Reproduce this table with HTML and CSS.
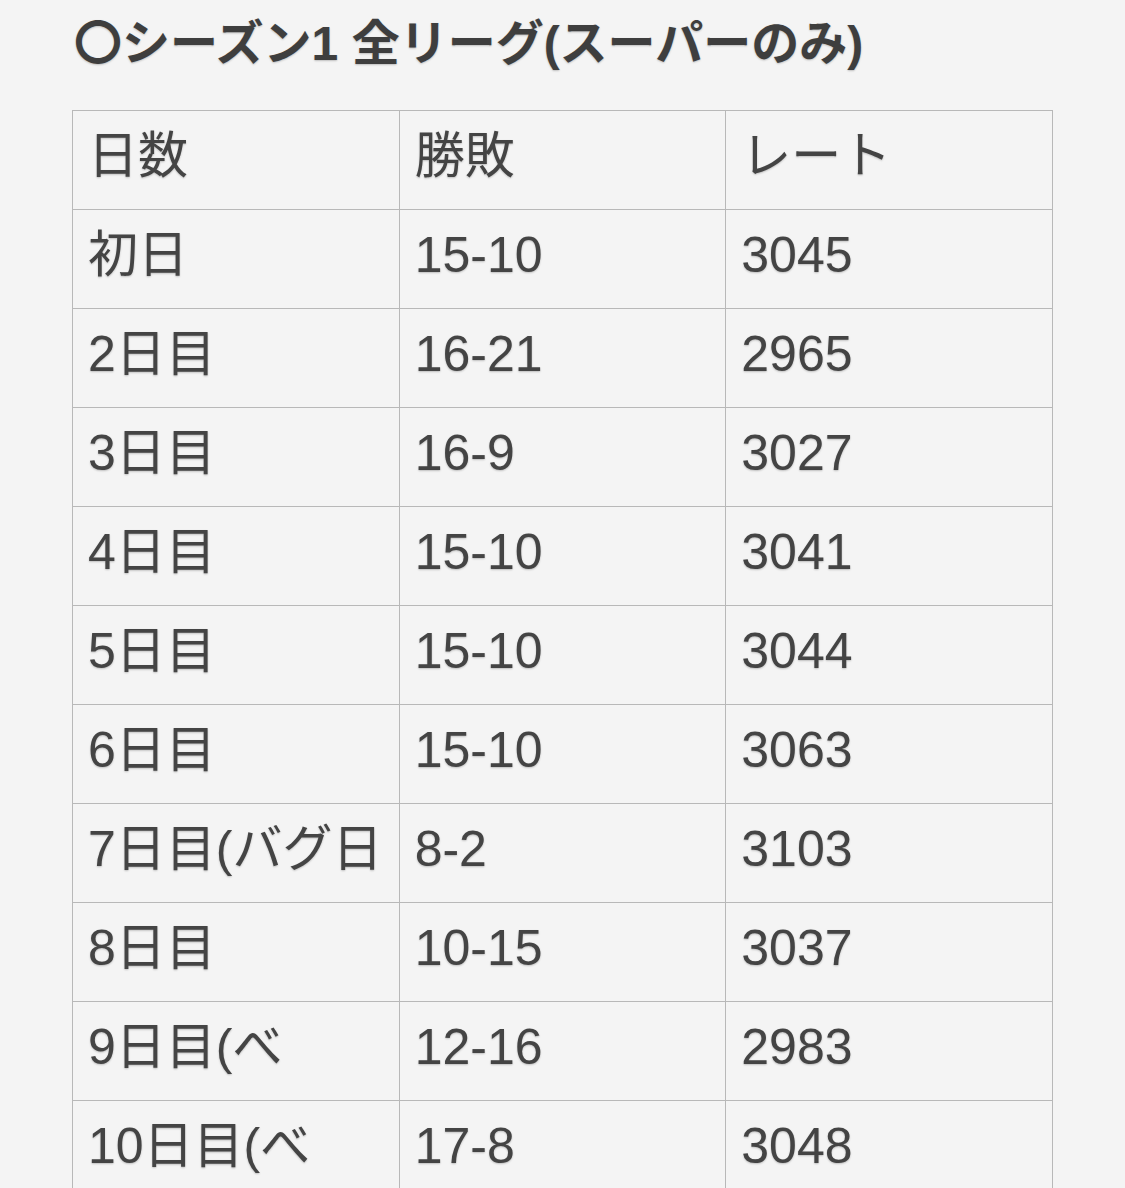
FILE: index.html
```html
<!DOCTYPE html>
<html lang="ja">
<head>
<meta charset="utf-8">
<link rel="stylesheet" href="styles.css">
</head>
<body>
<div class="page">
  <h1 class="title">〇シーズン1 全リーグ(スーパーのみ)</h1>
  <table class="stats">
    <tr><td>日数</td><td>勝敗</td><td>レート</td></tr>
    <tr><td>初日</td><td>15-10</td><td>3045</td></tr>
    <tr><td>2日目</td><td>16-21</td><td>2965</td></tr>
    <tr><td>3日目</td><td>16-9</td><td>3027</td></tr>
    <tr><td>4日目</td><td>15-10</td><td>3041</td></tr>
    <tr><td>5日目</td><td>15-10</td><td>3044</td></tr>
    <tr><td>6日目</td><td>15-10</td><td>3063</td></tr>
    <tr><td>7日目(バグ日</td><td>8-2</td><td>3103</td></tr>
    <tr><td>8日目</td><td>10-15</td><td>3037</td></tr>
    <tr><td>9日目(べ</td><td>12-16</td><td>2983</td></tr>
    <tr><td>10日目(べ</td><td>17-8</td><td>3048</td></tr>
  </table>
</div>
</body>
</html>
```
FILE: styles.css
```css
html, body {
  margin: 0;
  padding: 0;
  background: #f4f4f4;
}
.page {
  padding: 0 0 0 72px;
  font-family: "Liberation Sans", "Noto Sans CJK JP", sans-serif;
  color: #444;
  text-shadow: 0 1px 2px rgba(0, 0, 0, 0.22);
}
.title {
  margin: 0 0 22px 2px;
  font-size: 48px;
  line-height: 88px;
  font-weight: bold;
  color: #3e3e3e;
}
.stats {
  border-collapse: collapse;
  width: 981px;
  table-layout: fixed;
}
.stats td {
  border: 1px solid #b8b8b8;
  height: 99px;
  padding: 0 15px 8px 15px;
  box-sizing: border-box;
  font-size: 50px;
  line-height: 60px;
  white-space: nowrap;
  overflow: hidden;
  vertical-align: middle;
}
```
